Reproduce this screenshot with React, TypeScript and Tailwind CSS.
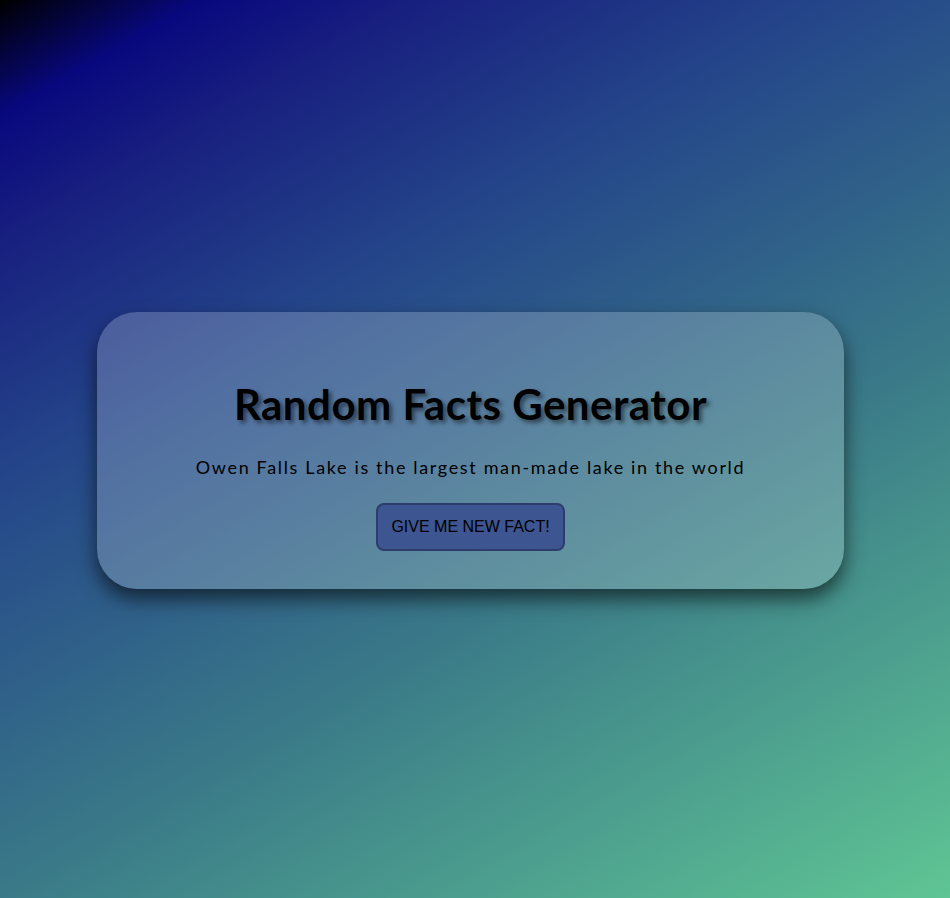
export default function App() {
  return (
    <div className="min-h-screen w-full flex items-center justify-center bg-[linear-gradient(150deg,#000000_0%,#08087e_8%,#18207f_17%,#25478a_34%,#3a7a88_62%,#5fc594_100%)] pr-[9px] pt-[2px]">
      <div className="w-[747px] h-[277px] rounded-[40px] bg-white/20 shadow-[0_10px_20px_rgba(0,0,0,0.6)] flex flex-col items-center pt-[66px] font-['Lato',sans-serif] text-black">
        <h1 className="text-[42px] leading-[52px] font-bold tracking-[0.5px] [text-shadow:3px_3px_4px_rgba(0,0,0,0.5)]">
          Random Facts Generator
        </h1>
        <p className="mt-[25px] text-[18px] leading-[24px] tracking-[1.65px]">
          Owen Falls Lake is the largest man-made lake in the world
        </p>
        <button className="mt-[24px] h-[48px] px-[13px] rounded-[8px] bg-[#3d5591] border-2 border-[#2c3d6c] font-['Liberation_Sans',Arial,sans-serif] text-[16px] text-black">
          GIVE ME NEW FACT!
        </button>
      </div>
    </div>
  );
}
